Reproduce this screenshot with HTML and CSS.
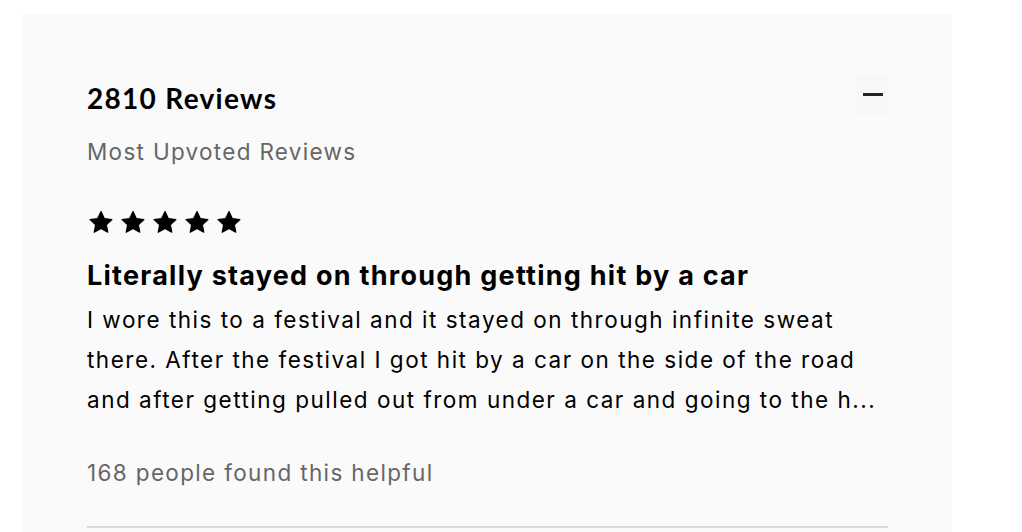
FILE: index.html
```html
<!DOCTYPE html>
<html>
<head>
<meta charset="utf-8">
<link rel="stylesheet" href="styles.css">
</head>
<body>
<section class="panel">
  <div class="head">
    <h2 class="count">2810 Reviews</h2>
    <button class="toggle" aria-label="Collapse"><span class="minus"></span></button>
  </div>
  <p class="sort">Most Upvoted Reviews</p>
  <article class="review">
    <div class="stars">
      <svg viewBox="0 0 26 24"><path d="M13 1.6l3.3 7 7.6.9-5.6 5.2 1.5 7.5L13 18.4l-6.8 3.8 1.5-7.5-5.6-5.2 7.6-.9z"/></svg>
      <svg viewBox="0 0 26 24"><path d="M13 1.6l3.3 7 7.6.9-5.6 5.2 1.5 7.5L13 18.4l-6.8 3.8 1.5-7.5-5.6-5.2 7.6-.9z"/></svg>
      <svg viewBox="0 0 26 24"><path d="M13 1.6l3.3 7 7.6.9-5.6 5.2 1.5 7.5L13 18.4l-6.8 3.8 1.5-7.5-5.6-5.2 7.6-.9z"/></svg>
      <svg viewBox="0 0 26 24"><path d="M13 1.6l3.3 7 7.6.9-5.6 5.2 1.5 7.5L13 18.4l-6.8 3.8 1.5-7.5-5.6-5.2 7.6-.9z"/></svg>
      <svg viewBox="0 0 26 24"><path d="M13 1.6l3.3 7 7.6.9-5.6 5.2 1.5 7.5L13 18.4l-6.8 3.8 1.5-7.5-5.6-5.2 7.6-.9z"/></svg>
    </div>
    <h3 class="title">Literally stayed on through getting hit by a car</h3>
    <p class="body">I wore this to a festival and it stayed on through infinite sweat<br>there. After the festival I got hit by a car on the side of the road<br>and after getting pulled out from under a car and going to the h...</p>
    <p class="helpful">168 people found this helpful</p>
  </article>
  <hr class="divider">
</section>
</body>
</html>
```
FILE: styles.css
```css
html, body { margin: 0; padding: 0; background: #fff; }
body { font-family: "Inter", "Noto Sans", sans-serif; color: #000; }
.panel {
  margin: 14px 0 0 22px;
  width: 930px;
  height: 518px;
  box-sizing: border-box;
  background: #fafafa;
  padding: 66px 64px 0 65px;
}
.head { display: flex; justify-content: space-between; align-items: flex-start; }
.count {
  margin: 0;
  font-family: "Lato", "Inter", sans-serif;
  font-size: 28px; font-weight: 700; line-height: 36px; letter-spacing: 1.3px;
}
.toggle {
  width: 32px; height: 40px; margin: -6px -1px 0 0; border: 0; padding: 0;
  background: #f8f7f7; display: flex; align-items: center; justify-content: center;
}
.minus { display: block; width: 20px; height: 3px; background: #222; }
.sort { margin: 19px 0 0; font-size: 22.5px; line-height: 34px; color: #666; letter-spacing: 1.3px; }
.review { margin-top: 41px; }
.stars { display: flex; gap: 6px; height: 24px; padding-left: 1px; }
.stars svg { width: 26px; height: 24px; fill: #000; stroke: #000; stroke-width: 1.2; stroke-linejoin: round; }
.title { margin: 25px 0 0; font-size: 27px; font-weight: 700; line-height: 34px; letter-spacing: 1.25px; }
.body { margin: 7px 0 0; font-size: 22.5px; line-height: 40px; letter-spacing: 1.5px; }
.helpful { margin: 36px 0 0; font-size: 22.5px; line-height: 34px; color: #666; letter-spacing: 1.35px; }
.divider { margin: 36px 0 0; border: 0; height: 2px; background: #d9d9d9; }
```
